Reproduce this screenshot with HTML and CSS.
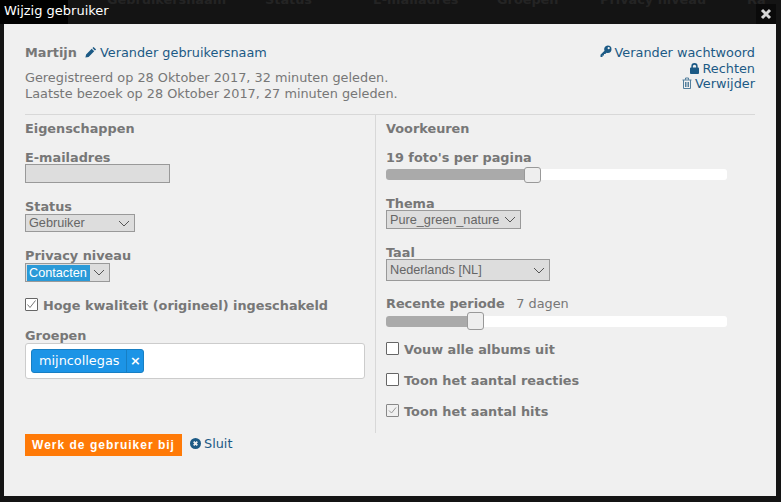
FILE: index.html
```html
<!DOCTYPE html>
<html>
<head>
  <title>Wijzig gebruiker</title>
  <link rel="stylesheet" href="styles.css">
</head>
<body>
  <!-- table header of the page behind the dialog -->
  <div class="behind">
    <span>Gebruikersnaam</span>
    <span>Status</span>
    <span>E-mailadres</span>
    <span>Groepen</span>
    <span>Privacy niveau</span>
    <span>Ra</span>
  </div>

  <div class="dialog">
    <div class="titlebar">
      <span class="title">Wijzig gebruiker</span>
      <span class="close">
        <svg width="12" height="12" viewBox="0 0 12 12"><path d="M2 2l8 8M10 2l-8 8" stroke="#d6d6d6" stroke-width="3"/></svg>
      </span>
    </div>

    <div class="panel">
      <div class="top">
        <div class="who">
          <div class="name-row">
            <b>Martijn</b>
            <a class="link pencil-link" href="#">
              <svg class="icon" width="12" height="12" viewBox="0 0 12 12"><path d="M8.6.9l2.5 2.5-1.2 1.2-2.5-2.5zM6.7 2.8l2.5 2.5-5.6 5.6L.4 11.600l.7-3.2z" fill="#1c5a85"/></svg>Verander gebruikersnaam
            </a>
          </div>
          <p class="dates">Geregistreerd op 28 Oktober 2017, 32 minuten geleden.<br>Laatste bezoek op 28 Oktober 2017, 27 minuten geleden.</p>
        </div>
        <div class="actions">
          <a class="link" href="#">
            <svg class="icon" width="12" height="13" viewBox="0 0 12 13"><path d="M7.800.5a3.700 3.700 0 0 1 0 7.400c-.4 0-.8-.1-1.200-.2L5.300 9H4v1.500H2.500V12H.5V9.800l4-4a3.700 3.700 0 0 1 3.300-5.300zm.9 1.600a1.100 1.100 0 1 0 0 2.200 1.100 1.100 0 0 0 0-2.200z" fill="#1c5a85"/></svg>Verander wachtwoord
          </a>
          <a class="link" href="#">
            <svg class="icon" width="9" height="11" viewBox="0 0 10 12"><path d="M1.500 5V3.500a3.500 3.500 0 0 1 7 0V5h.5a1 1 0 0 1 1 1v5a1 1 0 0 1-1 1H1a1 1 0 0 1-1-1V6a1 1 0 0 1 1-1zm1.700 0h3.600V3.500a1.800 1.800 0 0 0-3.600 0z" fill="#1c5a85"/></svg>Rechten
          </a>
          <a class="link" href="#">
            <svg class="icon" width="10" height="12" viewBox="0 0 10 12"><path d="M.5 3h9M3.500 2.800V1h3v1.800M1.500 3v8.500h7V3M3.500 5v5M5 5v5M6.500 5v5" fill="none" stroke="#527f9d" stroke-width="1"/></svg>Verwijder
          </a>
        </div>
      </div>

      <div class="columns">
        <div class="col col-left">
          <h4>Eigenschappen</h4>

          <div class="field">
            <label>E-mailadres</label>
            <div class="input"></div>
          </div>

          <div class="field field-status">
            <label>Status</label>
            <div class="select select-status"><span>Gebruiker</span><svg class="chev" width="12" height="7" viewBox="0 0 12 7"><path d="M1 1l5 5 5-5" fill="none" stroke="#555"/></svg></div>
          </div>

          <div class="field field-privacy">
            <label>Privacy niveau</label>
            <div class="select select-privacy"><span class="picked">Contacten</span><svg class="chev" width="12" height="7" viewBox="0 0 12 7"><path d="M1 1l5 5 5-5" fill="none" stroke="#555"/></svg></div>
          </div>

          <div class="check check-quality">
            <span class="box"><svg width="11" height="11" viewBox="0 0 11 11"><path d="M1.500 5.500l2.500 3 5.500-7" fill="none" stroke="#777"/></svg></span>
            <span>Hoge kwaliteit (origineel) ingeschakeld</span>
          </div>

          <div class="field field-groups">
            <label>Groepen</label>
            <div class="tagbox">
              <span class="tag"><span class="tag-name">mijncollegas</span><span class="tag-x">×</span></span>
            </div>
          </div>
        </div>

        <div class="col col-right">
          <h4>Voorkeuren</h4>

          <div class="field">
            <label>19 foto's per pagina</label>
            <div class="slider">
              <div class="track"><div class="fill" style="width: 139px"></div></div>
              <div class="handle" style="left: 138px"></div>
            </div>
          </div>

          <div class="field field-thema">
            <label>Thema</label>
            <div class="select select-thema"><span>Pure_green_nature</span><svg class="chev" width="12" height="7" viewBox="0 0 12 7"><path d="M1 1l5 5 5-5" fill="none" stroke="#555"/></svg></div>
          </div>

          <div class="field field-taal">
            <label>Taal</label>
            <div class="select select-taal"><span>Nederlands [NL]</span><svg class="chev" width="12" height="7" viewBox="0 0 12 7"><path d="M1 1l5 5 5-5" fill="none" stroke="#555"/></svg></div>
          </div>

          <div class="field field-recent">
            <label>Recente periode <span class="days">7 dagen</span></label>
            <div class="slider slider-recent">
              <div class="track"><div class="fill" style="width: 82px"></div></div>
              <div class="handle" style="left: 81px"></div>
            </div>
          </div>

          <div class="check check-first"><span class="box"></span><span>Vouw alle albums uit</span></div>
          <div class="check"><span class="box"></span><span>Toon het aantal reacties</span></div>
          <div class="check">
            <span class="box box-muted"><svg width="11" height="11" viewBox="0 0 11 11"><path d="M2 5.500l2.500 2.500 4.500-5.500" fill="none" stroke="#999"/></svg></span>
            <span>Toon het aantal hits</span>
          </div>
        </div>
      </div>

      <div class="buttons">
        <button class="save">Werk de gebruiker bij</button>
        <a class="link sluit" href="#">
          <svg class="icon" width="11" height="11" viewBox="0 0 11 11"><circle cx="5.500" cy="5.500" r="5.500" fill="#1c5a85"/><path d="M3.700 3.700l3.600 3.600M7.300 3.700L3.700 7.300" stroke="#f0f0f0" stroke-width="1.800"/></svg>Sluit
        </a>
      </div>
    </div>
  </div>
</body>
</html>
```

FILE: styles.css
```css
* {
  box-sizing: border-box;
}

html, body {
  height: 100%;
}

body {
  margin: 0;
  overflow: hidden;
  background-color: #141414;
  font-family: "DejaVu Sans", Verdana, sans-serif;
  font-size: 12.85px;
  line-height: 16px;
  color: #777;
}

.behind {
  display: grid;
  grid-template-columns: 158px 108px 124px 103px 147px 40px;
  height: 24px;
  margin-top: -8px;
  padding-left: 107px;
  font-weight: bold;
  color: #242424;
  white-space: nowrap;
  overflow: hidden;
}

/* dialog */
.dialog {
  position: absolute;
  left: 0;
  top: 0;
  width: 776px;
  height: 496px;
  display: flex;
  flex-direction: column;
}

.titlebar {
  height: 24px;
  flex: none;
  display: flex;
  align-items: flex-start;
  justify-content: space-between;
}

.title {
  width: 68px;
  height: 24px;
  padding: 3px 0 0 4px;
  background-color: #000;
  color: #fff;
  font-size: 13px;
  white-space: nowrap;
}

.close {
  width: 20px;
  height: 20px;
  margin-top: 4px;
  display: flex;
  align-items: center;
  justify-content: center;
  background-color: #0a0a0a;
}

.panel {
  flex: 1;
  margin-left: 4px;
  padding: 21px 21px 0;
  background-color: #f0f0f0;
}

.link {
  color: #1c5a85;
  text-decoration: none;
  white-space: nowrap;
}

.icon {
  margin-right: 3px;
  vertical-align: -1px;
}

/* top part */
.top {
  display: flex;
  justify-content: space-between;
  height: 70px;
  border-bottom: 1px solid #d8d8d8;
}

.name-row {
  line-height: 16px;
}

.pencil-link {
  margin-left: 4px;
}

.dates {
  margin: 9px 0 0;
  line-height: 16px;
}

.actions {
  display: flex;
  flex-direction: column;
  align-items: flex-end;
  line-height: 15.500px;
}

/* columns */
.columns {
  display: flex;
  height: 318px;
}

.col {
  padding-top: 6px;
}

.col-left {
  width: 351px;
  border-right: 1px solid #d8d8d8;
}

.col-right {
  padding-left: 10px;
}

h4 {
  margin: 0 0 13px;
  font-size: 12.85px;
  line-height: 16px;
}

.field label {
  display: block;
  font-weight: bold;
  line-height: 15px;
}

.input {
  width: 145px;
  height: 19px;
  margin-top: -1px;
  background-color: #ddd;
  border: 1px solid #999;
}

.select {
  display: flex;
  align-items: center;
  justify-content: space-between;
  padding: 0 4px 0 3px;
  background-color: #ddd;
  border: 1px solid #999;
  font-family: "Liberation Sans", Arial, sans-serif;
  font-size: 12.700px;
  color: #666;
  white-space: nowrap;
}

.chev {
  flex: none;
}

.field-status {
  margin-top: 16px;
}

.select-status {
  width: 110px;
  height: 18px;
}

.field-privacy {
  margin-top: 16px;
}

.select-privacy {
  width: 85px;
  height: 19px;
  padding-left: 1px;
}

.picked {
  padding: 1px 3px 0 2px;
  background-color: #2a9ad8;
  color: #fff;
  line-height: 15px;
}

.check {
  display: flex;
  align-items: center;
  gap: 5px;
  height: 16px;
  margin-top: 15px;
  font-weight: bold;
  white-space: nowrap;
}

.box {
  width: 13px;
  height: 13px;
  flex: none;
  margin-bottom: 3px;
  display: flex;
  align-items: center;
  justify-content: center;
  background-color: #fff;
  border: 1px solid #666;
  border-radius: 1px;
}

.box-muted {
  background-color: #f0f0f0;
  border-color: #888;
}

.check-quality {
  margin-top: 16px;
}

.field-groups {
  margin-top: 14px;
}

.tagbox {
  width: 340px;
  height: 36px;
  padding: 5px;
  background-color: #fff;
  border: 1px solid #ccc;
  border-radius: 3px;
}

.tag {
  display: inline-flex;
  height: 24px;
  background-color: #1c94e6;
  border: 1px solid #177fc4;
  border-radius: 3px;
  color: #fff;
  line-height: 22px;
}

.tag-name {
  padding: 0 7px;
}

.tag-x {
  width: 17px;
  border-left: 1px solid #177fc4;
  font-weight: bold;
  text-align: center;
}

/* sliders */
.slider {
  position: relative;
  width: 341px;
  height: 16px;
  margin-top: 2px;
  padding-top: 2px;
}

.track {
  height: 11px;
  background-color: #fff;
  border-radius: 3px;
  overflow: hidden;
}

.fill {
  height: 100%;
  background-color: #aaa;
}

.handle {
  position: absolute;
  top: 0;
  width: 17px;
  height: 16px;
  background-color: #eee;
  border: 1px solid #999;
  border-radius: 3px;
}

.field-thema {
  margin-top: 13px;
}

.select-thema {
  width: 135px;
  height: 19px;
  margin-top: -1px;
}

.field-taal {
  margin-top: 16px;
}

.select-taal {
  width: 164px;
  height: 22px;
  margin-top: -1px;
}

.field-recent {
  margin-top: 15px;
}

.days {
  margin-left: 7px;
  font-weight: normal;
}

.slider-recent {
  height: 18px;
  margin-top: 1px;
  padding-top: 4px;
}

.slider-recent .handle {
  height: 18px;
}

.check-first {
  margin-top: 12px;
}

/* bottom */
.buttons {
  display: flex;
  align-items: center;
  gap: 8px;
  margin-top: 1px;
}

.sluit {
  margin-bottom: 2px;
}

.save {
  width: 157px;
  height: 22px;
  padding: 0;
  background-color: #ff7a07;
  border: none;
  color: #fff;
  font-family: "Liberation Sans", Arial, sans-serif;
  font-size: 12px;
  font-weight: bold;
  letter-spacing: 1px;
}
```
